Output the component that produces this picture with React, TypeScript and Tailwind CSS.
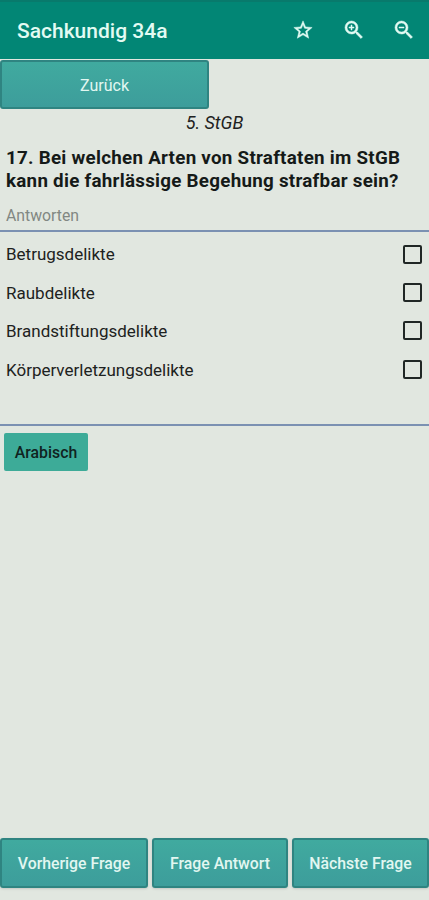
import { MdStarBorder, MdZoomIn, MdZoomOut } from "react-icons/md";

const answers = ["Betrugsdelikte", "Raubdelikte", "Brandstiftungsdelikte", "Körperverletzungsdelikte"];

const buttonStyle =
  "flex items-center justify-center rounded-[3px] border-2 border-[#2f8481] bg-linear-to-b from-[#40aa9f] to-[#3d9d9b] pt-[2px] text-[#e2f7f1] whitespace-nowrap";

const iconStyle = "stroke-[#e2fbf3] stroke-[0.5] [&_path[fill=none]]:stroke-none";

export default function App() {
  return (
    <div className="flex h-[900px] w-[429px] flex-col overflow-hidden bg-[#e1e7e0] font-['Roboto',sans-serif] text-[#1d2221]">
      <header className="flex h-[59px] shrink-0 items-center border-t-2 border-[#087a6c] bg-[#028675] pr-[13px] pl-[17px] text-[#e2fbf3]">
        <h1 className="flex-1 pt-[2px] text-[21px] font-medium whitespace-nowrap">Sachkundig 34a</h1>
        <MdStarBorder className={`${iconStyle} mr-[28px] mb-[2px] size-[22px]`} />
        <MdZoomIn className={`${iconStyle} mr-[26px] mb-[2px] size-6`} />
        <MdZoomOut className={`${iconStyle} mb-[2px] size-6`} />
      </header>

      <button className={`${buttonStyle} mt-px h-[49px] w-[209px] shrink-0 text-[16px]`}>Zurück</button>

      <p className="h-[28px] shrink-0 text-center text-[18px] leading-[27px] italic">5. StGB</p>
      <h2 className="mt-[10px] shrink-0 pl-[6px] text-[18.8px] leading-[23px] font-bold tracking-[0.26px] whitespace-nowrap text-[#151a18]">
        17. Bei welchen Arten von Straftaten im StGB
        <br />
        kann die fahrlässige Begehung strafbar sein?
      </h2>
      <p className="mt-[12px] h-[25px] shrink-0 pl-[6px] text-[15.8px] leading-[22px] text-[#818783]">Antworten</p>

      <section className="h-[196px] shrink-0 border-y-2 border-[#7b91b2] pt-[4px] pr-[7px] pl-[6px]">
        {answers.map((answer) => (
          <label key={answer} className="flex h-[38.4px] items-center justify-between text-[17px]">
            <span>{answer}</span>
            <span className="mb-[2px] size-[19px] rounded-[2px] border-2 border-[#202725]" />
          </label>
        ))}
      </section>

      <button className="mt-[7px] ml-1 h-[38px] w-[84px] shrink-0 rounded-[2px] bg-[#3dab98] pt-[2px] text-[15.8px] font-medium text-[#10231f]">
        Arabisch
      </button>

      <nav className="mt-auto mb-[12px] flex h-[50px] shrink-0 gap-1 text-[15.8px] font-medium">
        <button className={`${buttonStyle} w-[148px] shadow-sm`}>Vorherige Frage</button>
        <button className={`${buttonStyle} w-[136px] shadow-sm`}>Frage Antwort</button>
        <button className={`${buttonStyle} w-[137px] shadow-sm`}>Nächste Frage</button>
      </nav>
    </div>
  );
}
